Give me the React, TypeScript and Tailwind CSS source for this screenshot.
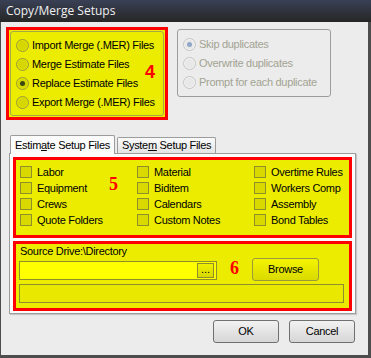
import React from "react";

const ui = { fontFamily: '"Liberation Sans", Arial, sans-serif' };
const txt = "text-[11px] tracking-[-0.3px] leading-none";

function Radio({ checked, disabled, label }: { checked?: boolean; disabled?: boolean; label: string }) {
	return (
		<div className="flex items-center h-[19px] whitespace-nowrap">
			<span
				className={`w-[13px] h-[13px] shrink-0 rounded-full border flex items-center justify-center ${
					disabled ? "border-[#c4c4c4] bg-[#f2f2f2]" : "border-[#9a9a3a] bg-[#e2e200]"
				}`}
			>
				<span
					className={`w-[9px] h-[9px] rounded-full flex items-center justify-center ${
						disabled ? "bg-[#e8e8e8]" : "bg-[#d6d600]"
					}`}
				>
					{checked && (
						<span className={`w-[5px] h-[5px] rounded-full ${disabled ? "bg-[#8fa8c8]" : "bg-[#3a4a10]"}`} />
					)}
				</span>
			</span>
			<span className={`ml-[3px] ${txt} ${disabled ? "text-[#a3a393]" : "text-black"}`}>{label}</span>
		</div>
	);
}

function Check({ label }: { label: string }) {
	return (
		<div className="flex items-center h-[16px] whitespace-nowrap">
			<span className="w-[12px] h-[12px] shrink-0 border border-[#8e8e2a] bg-[#d9d900]" />
			<span className={`ml-[5px] ${txt}`}>{label}</span>
		</div>
	);
}

export default function App() {
	return (
		<div className="w-[371px] h-[358px] bg-[#4d4d4d] flex flex-col" style={ui}>
			<div className="h-[22px] bg-gradient-to-b from-[#3a4156] to-[#262626] flex items-center pl-[6px]">
				<span className="text-[#f0f0f0] text-[12px]" style={{ fontFamily: '"Open Sans", sans-serif' }}>
					Copy/Merge Setups
				</span>
			</div>
			<div className="flex-1 ml-[1px] mr-[3px] mb-[3px] bg-[#ececec] flex flex-col">
				<div className="flex mt-[5px] ml-[5px]">
					<div className="w-[162px] h-[93px] border-[3px] border-[#ff0000] bg-[#ecec00] p-[1px]">
						<div className="relative h-full border border-[#a8a84a] rounded-[3px] pl-[5px] pt-[4px]">
							<Radio label="Import Merge (.MER) Files" />
							<Radio label="Merge Estimate Files" />
							<Radio checked label="Replace Estimate Files" />
							<Radio label="Export Merge (.MER) Files" />
							<span
								className="absolute left-[134px] top-[31px] text-[#ff0000] text-[18px] font-bold leading-none"
								style={{ fontFamily: '"Liberation Sans", sans-serif' }}
							>
								4
							</span>
						</div>
					</div>
					<div className="ml-[9px] mt-[2px] w-[154px] h-[68px] border border-[#9c9c9c] rounded-[3px] pl-[5px] pt-[5px]">
						<Radio disabled checked label="Skip duplicates" />
						<Radio disabled label="Overwrite duplicates" />
						<Radio disabled label="Prompt for each duplicate" />
					</div>
				</div>

				<div className="flex items-end ml-[9px] mt-[15px] h-[18px] whitespace-nowrap">
					<div className={`h-[19px] px-[4px] border border-b-0 border-[#9c9c9c] rounded-t-[2px] bg-[#fbfbfb] ${txt} flex items-center relative z-10 -mb-[1px]`}>
						<span>
							Estim<u>a</u>te Setup Files
						</span>
					</div>
					<div className={`h-[16px] ml-[2px] px-[4px] border border-b-0 border-[#9c9c9c] rounded-t-[2px] bg-gradient-to-b from-[#fafafa] to-[#e4e4e4] ${txt} flex items-center`}>
						<span>
							Syste<u>m</u> Setup Files
						</span>
					</div>
				</div>

				<div className="ml-[8px] w-[347px] h-[161px] border border-[#9c9c9c] bg-[#fbfbfb] shadow-[1px_1px_1px_#c8c8c8] px-[3px] pt-[3px] flex flex-col gap-[3px]">
					<div className="relative h-[81px] border-[3px] border-[#ff0000] bg-[#ecec00] pl-[4px] pt-[4px] grid grid-cols-[117px_117px_1fr]">
						<div>
							<Check label="Labor" />
							<Check label="Equipment" />
							<Check label="Crews" />
							<Check label="Quote Folders" />
						</div>
						<div>
							<Check label="Material" />
							<Check label="Biditem" />
							<Check label="Calendars" />
							<Check label="Custom Notes" />
						</div>
						<div>
							<Check label="Overtime Rules" />
							<Check label="Workers Comp" />
							<Check label="Assembly" />
							<Check label="Bond Tables" />
						</div>
						<span
							className="absolute left-[93px] top-[15px] text-[#ff0000] text-[18px] font-bold leading-none"
							style={{ fontFamily: '"Liberation Serif", serif' }}
						>
							5
						</span>
					</div>
					<div className="h-[70px] border-[3px] border-[#ff0000] bg-[#ecec00] px-[3px] flex flex-col">
						<div className={`${txt} mt-[2px] ml-[1px]`}>Source Drive:\Directory</div>
						<div className="flex items-center mt-[1px]">
							<div className="w-[198px] h-[19px] border border-[#8e8e2a] bg-[#ffff00] flex items-center justify-end pr-[2px] mt-[2px]">
								<span className="w-[17px] h-[15px] border border-[#8e8e2a] bg-gradient-to-b from-[#f0f000] to-[#d8d800] text-[11px] leading-none flex items-end justify-center pb-[2px]">
									...
								</span>
							</div>
							<span
								className="ml-[13px] text-[#ff0000] text-[18px] font-bold leading-none -mt-[4px]"
								style={{ fontFamily: '"Liberation Serif", serif' }}
							>
								6
							</span>
							<div className={`ml-[13px] w-[67px] h-[23px] border border-[#9a9a3a] rounded-[3px] bg-gradient-to-b from-[#f4f400] to-[#dada00] ${txt} flex items-center justify-center`}>
								Browse
							</div>
						</div>
						<div className="mt-[3px] w-[325px] h-[19px] border border-[#8e8e2a] bg-[#e8e800]" />
					</div>
				</div>

				<div className="flex justify-end gap-[10px] mt-[6px] mr-[13px]">
					<div className={`w-[66px] h-[23px] border border-[#707070] rounded-[3px] bg-gradient-to-b from-[#f2f2f2] to-[#d6d6d6] ${txt} flex items-center justify-center`}>
						OK
					</div>
					<div className={`w-[66px] h-[23px] border border-[#707070] rounded-[3px] bg-gradient-to-b from-[#f2f2f2] to-[#d6d6d6] ${txt} flex items-center justify-center`}>
						Cancel
					</div>
				</div>
			</div>
		</div>
	);
}
